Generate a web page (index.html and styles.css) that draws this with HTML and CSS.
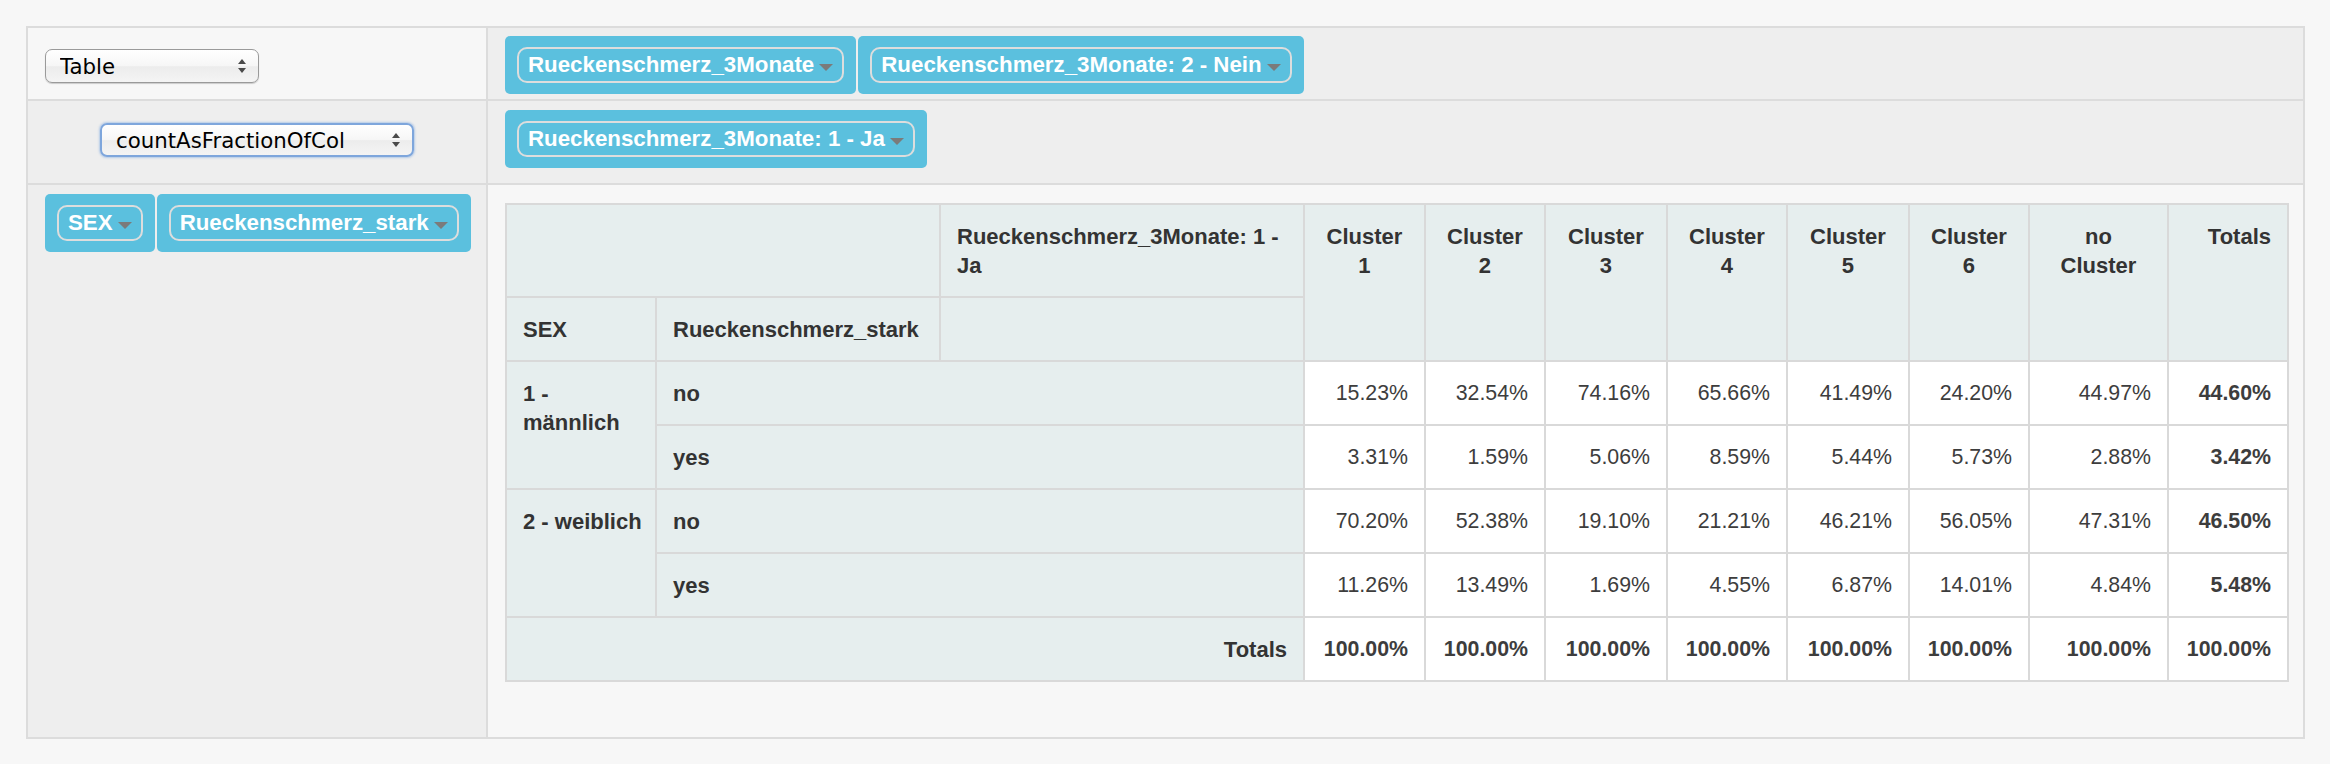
FILE: index.html
```html
<!DOCTYPE html>
<html>
<head>
<meta charset="utf-8">
<title>Pivot</title>
<link rel="stylesheet" href="styles.css">
</head>
<body>
<div class="pvtUi">
  <div class="cell renderer">
    <div class="select">
      <select><option>Table</option></select>
      <svg class="updown" width="8" height="14" viewBox="0 0 8 14"><polygon points="0,5 4,0 8,5"/><polygon points="0,9 4,14 8,9"/></svg>
    </div>
  </div>
  <div class="cell axis unused">
    <ul class="pills">
      <li><span class="attr">Rueckenschmerz_3Monate<i class="caret"></i></span></li>
      <li><span class="attr">Rueckenschmerz_3Monate: 2 - Nein<i class="caret"></i></span></li>
    </ul>
  </div>
  <div class="cell vals">
    <div class="select focused">
      <select><option>countAsFractionOfCol</option></select>
      <svg class="updown" width="8" height="14" viewBox="0 0 8 14"><polygon points="0,5 4,0 8,5"/><polygon points="0,9 4,14 8,9"/></svg>
    </div>
  </div>
  <div class="cell axis cols">
    <ul class="pills">
      <li><span class="attr">Rueckenschmerz_3Monate: 1 - Ja<i class="caret"></i></span></li>
    </ul>
  </div>
  <div class="cell axis rows">
    <ul class="pills">
      <li><span class="attr">SEX<i class="caret"></i></span></li>
      <li><span class="attr">Rueckenschmerz_stark<i class="caret"></i></span></li>
    </ul>
  </div>
  <div class="cell rendererArea">
    <table class="pvtTable">
      <colgroup>
        <col class="c150"><col class="c284"><col class="c364">
        <col class="c121"><col class="c120"><col class="c122"><col class="c120"><col class="c122"><col class="c120">
        <col class="c139"><col class="c120">
      </colgroup>
      <thead>
        <tr>
          <th colspan="2"></th>
          <th class="axisLabel">Rueckenschmerz_3Monate: 1 - Ja</th>
          <th class="colLabel" rowspan="2"><span>Cluster 1</span></th>
          <th class="colLabel" rowspan="2"><span>Cluster 2</span></th>
          <th class="colLabel" rowspan="2"><span>Cluster 3</span></th>
          <th class="colLabel" rowspan="2"><span>Cluster 4</span></th>
          <th class="colLabel" rowspan="2"><span>Cluster 5</span></th>
          <th class="colLabel" rowspan="2"><span>Cluster 6</span></th>
          <th class="colLabel" rowspan="2"><span>no Cluster</span></th>
          <th class="totalLabel" rowspan="2">Totals</th>
        </tr>
        <tr>
          <th>SEX</th>
          <th>Rueckenschmerz_stark</th>
          <th></th>
        </tr>
      </thead>
      <tbody>
        <tr>
          <th class="rowLabel" rowspan="2">1 - männlich</th>
          <th colspan="2">no</th>
          <td>15.23%</td><td>32.54%</td><td>74.16%</td><td>65.66%</td><td>41.49%</td><td>24.20%</td><td>44.97%</td><td class="total">44.60%</td>
        </tr>
        <tr>
          <th colspan="2">yes</th>
          <td>3.31%</td><td>1.59%</td><td>5.06%</td><td>8.59%</td><td>5.44%</td><td>5.73%</td><td>2.88%</td><td class="total">3.42%</td>
        </tr>
        <tr>
          <th class="rowLabel" rowspan="2">2 - weiblich</th>
          <th colspan="2">no</th>
          <td>70.20%</td><td>52.38%</td><td>19.10%</td><td>21.21%</td><td>46.21%</td><td>56.05%</td><td>47.31%</td><td class="total">46.50%</td>
        </tr>
        <tr>
          <th colspan="2">yes</th>
          <td>11.26%</td><td>13.49%</td><td>1.69%</td><td>4.55%</td><td>6.87%</td><td>14.01%</td><td>4.84%</td><td class="total">5.48%</td>
        </tr>
        <tr>
          <th class="totalLabel" colspan="3">Totals</th>
          <td class="total">100.00%</td><td class="total">100.00%</td><td class="total">100.00%</td><td class="total">100.00%</td><td class="total">100.00%</td><td class="total">100.00%</td><td class="total">100.00%</td><td class="total">100.00%</td>
        </tr>
      </tbody>
    </table>
  </div>
</div>
</body>
</html>
```

FILE: styles.css
```css
html, body {
  margin: 0;
  background: #f7f7f7;
}
body {
  padding: 26px 0 0 26px;
  font-family: "Liberation Sans", Arial, sans-serif;
  color: #333;
}
.pvtUi {
  width: 2279px;
  box-sizing: border-box;
  border: 2px solid #dcdcdc;
  background: #dcdcdc;
  display: grid;
  grid-template-columns: 458px 1fr;
  grid-template-rows: 71px 82px 552px;
  gap: 2px;
}
.cell {
  background: #eeeeee;
  box-sizing: border-box;
  min-width: 0;
}
.renderer {
  background: #f7f7f7;
  display: flex;
  align-items: center;
  padding: 5px 17px 0;
}
.vals {
  display: flex;
  align-items: center;
  justify-content: center;
  padding-bottom: 4px;
}
.axis {
  padding: 9px 17px;
}
.unused {
  padding-top: 8px;
}
.rows {
  padding-right: 10px;
}
.rendererArea {
  background: #f7f7f7;
  padding: 18px 16px 0 17px;
}

/* selects */
.select {
  position: relative;
  display: inline-block;
}
.select select {
  appearance: none;
  -webkit-appearance: none;
  display: block;
  box-sizing: border-box;
  height: 34px;
  margin: 0;
  font-family: "DejaVu Sans", sans-serif;
  font-size: 21.3px;
  color: #000;
  border: 1px solid #9a9a9a;
  border-radius: 7px;
  background: linear-gradient(#ffffff, #f6f6f6 50%, #ececec 52%, #f4f4f4);
  box-shadow: 0 1px 1px rgba(0, 0, 0, 0.18);
  padding: 0 0 0 14px;
  width: 214px;
}
.select.focused select {
  width: 314px;
  border: 2px solid #7ea6dc;
  box-shadow: 0 0 2px 1px rgba(110, 160, 225, 0.45);
  padding-left: 14px;
}
.updown {
  position: absolute;
  right: 13px;
  top: 10px;
  fill: #4a4a4a;
  pointer-events: none;
}
.select.focused .updown {
  right: 14px;
}

/* pills */
.pills {
  list-style: none;
  margin: 0;
  padding: 0;
  display: flex;
  flex-wrap: nowrap;
  gap: 2px;
  align-items: flex-start;
}
.pills li {
  display: flex;
  flex: none;
  background: #5bc0de;
  border-radius: 5px;
  padding: 11px 12px;
}
.attr {
  display: inline-flex;
  align-items: center;
  border: 2px solid #dddddd;
  border-radius: 10px;
  padding: 3px 9px;
  color: #fff;
  font-weight: bold;
  font-size: 22.3px;
  line-height: 26px;
  white-space: nowrap;
}
.caret {
  display: inline-block;
  width: 0;
  height: 0;
  margin: 5px 0 0 5px;
  border-left: 7px solid transparent;
  border-right: 7px solid transparent;
  border-top: 7px solid #7b7b7b;
}

/* pivot table */
.pvtTable {
  border-collapse: collapse;
  table-layout: fixed;
  width: 1782px;
  font-size: 21.33px;
  line-height: 29px;
}
.c150 { width: 150px; }
.c284 { width: 284px; }
.c364 { width: 364px; }
.c121 { width: 121px; }
.c120 { width: 120px; }
.c122 { width: 122px; }
.c139 { width: 139px; }
.pvtTable th,
.pvtTable td {
  border: 2px solid #d9d9d9;
  padding: 17px 16px 16px;
  vertical-align: top;
}
.pvtTable th {
  background: #e6eeee;
  color: #333;
  font-weight: bold;
  font-size: 22px;
  text-align: left;
}
.pvtTable td {
  background: #fff;
  color: #3d3d3d;
  text-align: right;
  white-space: nowrap;
}
.pvtTable .colLabel {
  text-align: center;
}
.pvtTable .colLabel span {
  display: inline-block;
  width: min-content;
}
.pvtTable .totalLabel {
  text-align: right;
}
.pvtTable .rowLabel {
  padding-right: 10px;
}
.pvtTable .total {
  font-weight: bold;
}
```
